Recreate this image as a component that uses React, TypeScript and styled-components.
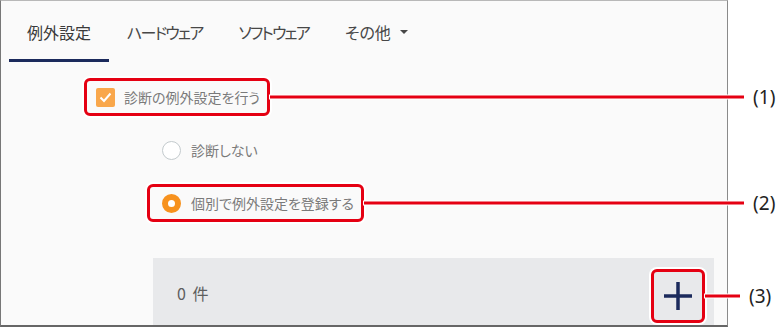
import styled, { createGlobalStyle } from "styled-components";

const GlobalStyle = createGlobalStyle`
  body {
    margin: 0;
    background: #ffffff;
    font-family: "Noto Sans CJK JP", "Noto Sans", sans-serif;
  }
`;

const Page = styled.div`
  width: 783px;
  height: 327px;
  position: relative;
  background: #ffffff;
`;

const Frame = styled.div`
  box-sizing: border-box;
  width: 728px;
  height: 327px;
  background: #fafafa;
  border-top: 1px solid #b8b8b8;
  border-left: 1px solid #777;
  border-right: 1px solid #8a8a8a;
  border-bottom: 2px solid #666;
  display: flex;
  flex-direction: column;
`;

const TabBar = styled.div`
  display: flex;
  padding-left: 8px;
  height: 61px;
`;

const Tab = styled.div<{ $active?: boolean; $tight?: boolean }>`
  box-sizing: border-box;
  height: 61px;
  padding: 20px 18px 0;
  border-bottom: 3px solid ${(p) => (p.$active ? "#1b2a5c" : "transparent")};
  font-size: 16px;
  line-height: 22px;
  letter-spacing: ${(p) => (p.$tight ? "-1.8px" : "0")};
  color: ${(p) => (p.$active ? "#3a3a3a" : "#474747")};
  font-feature-settings: "palt";
  display: flex;
  align-items: flex-start;
  gap: 9px;
`;

const Caret = styled.span`
  margin-top: 9px;
  width: 0;
  height: 0;
  border-left: 4px solid transparent;
  border-right: 4px solid transparent;
  border-top: 4px solid #474747;
`;

const Body = styled.div`
  display: flex;
  flex-direction: column;
  align-items: flex-start;
`;

const Highlight = styled.div<{ $left: number; $top: number }>`
  position: relative;
  box-sizing: border-box;
  margin: ${(p) => p.$top}px 0 0 ${(p) => p.$left}px;
  height: 38px;
  border: 3px solid #e50012;
  border-radius: 6px;
  box-shadow: 0 0 0 2px #ffffff;
  display: flex;
  align-items: center;
`;

const Leader = styled.span<{ $reach: number }>`
  position: absolute;
  left: 100%;
  top: 50%;
  margin-left: 3px;
  width: ${(p) => p.$reach}px;
  height: 3px;
  transform: translateY(-50%);
  background: #e50012;
  box-shadow: 0 0 0 1px #ffffff;
`;

const Callout = styled.span<{ $reach: number }>`
  position: absolute;
  left: 100%;
  top: 50%;
  margin-left: ${(p) => p.$reach + 12}px;
  transform: translateY(-50%);
  font-family: "Noto Sans", sans-serif;
  font-size: 19px;
  line-height: 22px;
  color: #222;
  white-space: nowrap;
`;

const CheckRow = styled.div`
  display: flex;
  align-items: center;
  gap: 9px;
  padding: 0 7px 0 9px;
`;

const CheckBox = styled.span`
  width: 19px;
  height: 19px;
  border-radius: 2px;
  background: #f9a74b;
  display: flex;
  align-items: center;
  justify-content: center;
`;

const Label = styled.span`
  font-size: 14px;
  line-height: 18px;
  color: #7a7a7a;
  font-feature-settings: "palt";
  white-space: nowrap;
`;

const RadioRow = styled.div`
  display: flex;
  align-items: center;
  gap: 10px;
  height: 32px;
  margin: 18px 0 0 146px;
  padding: 0 9px 0 15px;
`;

const RadioInRow = styled.div`
  display: flex;
  align-items: center;
  gap: 10px;
  padding: 0 7px 0 12px;
`;

const Radio = styled.span<{ $on?: boolean }>`
  box-sizing: border-box;
  width: 19px;
  height: 19px;
  border-radius: 50%;
  border: ${(p) => (p.$on ? "6px solid #f7921e" : "1.5px solid #c3cacd")};
  background: #ffffff;
`;

const ListBar = styled.div`
  margin: 36px 0 0 152px;
  width: 561px;
  height: 67px;
  background: #e8e9eb;
  display: flex;
  justify-content: space-between;
  align-items: flex-start;
  padding-left: 24px;
  box-sizing: border-box;
`;

const Count = styled.span`
  margin-top: 24px;
  font-size: 16px;
  line-height: 22px;
  word-spacing: 3px;
  color: #5e5e5e;
`;

const AddBox = styled(Highlight)`
  width: 54px;
  height: 54px;
  margin: 11px 9px 0 0;
  justify-content: center;
`;

export default function App() {
  return (
    <Page>
      <GlobalStyle />
      <Frame>
        <TabBar>
          <Tab $active>例外設定</Tab>
          <Tab $tight>ハードウェア</Tab>
          <Tab $tight>ソフトウェア</Tab>
          <Tab>
            その他
            <Caret />
          </Tab>
        </TabBar>
        <Body>
          <Highlight $left={83} $top={16}>
            <CheckRow>
              <CheckBox>
                <svg width="13" height="11" viewBox="0 0 13 11">
                  <path d="M1.5 5.5 L5 9 L11.5 1.5" fill="none" stroke="#fff" strokeWidth="2" />
                </svg>
              </CheckBox>
              <Label>診断の例外設定を行う</Label>
            </CheckRow>
            <Leader $reach={474} />
            <Callout $reach={474}>(1)</Callout>
          </Highlight>
          <RadioRow>
            <Radio />
            <Label>診断しない</Label>
          </RadioRow>
          <Highlight $left={146} $top={18}>
            <RadioInRow>
              <Radio $on />
              <Label>個別で例外設定を登録する</Label>
            </RadioInRow>
            <Leader $reach={380} />
            <Callout $reach={380}>(2)</Callout>
          </Highlight>
          <ListBar>
            <Count>0 件</Count>
            <AddBox $left={0} $top={11}>
              <svg width="28" height="28" viewBox="0 0 28 28">
                <path d="M14 0 V28 M0 14 H28" stroke="#1b2a5c" strokeWidth="3.5" />
              </svg>
              <Leader $reach={35} />
              <Callout $reach={35}>(3)</Callout>
            </AddBox>
          </ListBar>
        </Body>
      </Frame>
    </Page>
  );
}
